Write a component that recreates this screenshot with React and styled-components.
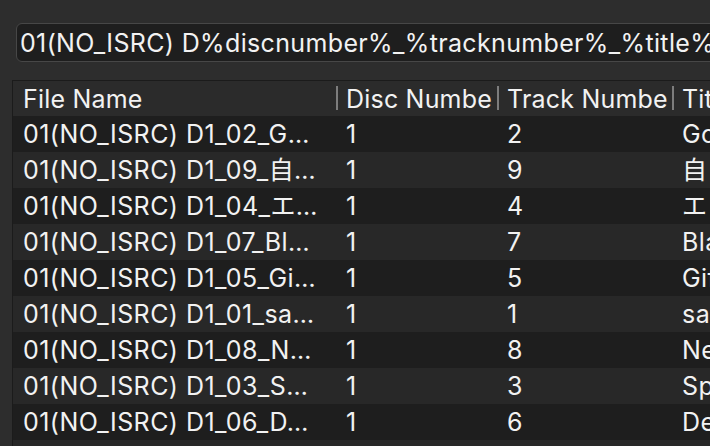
import React from 'react'
import styled, { createGlobalStyle } from 'styled-components'

const GlobalStyle = createGlobalStyle`
  html, body {
    margin: 0;
    padding: 0;
    background: #2d2d2d;
    overflow: hidden;
  }
  body {
    font-family: Inter, "Noto Sans CJK JP", sans-serif;
    color: #ececec;
  }
`

const columns = [
  { key: 'file', label: 'File Name', width: 323 },
  { key: 'disc', label: 'Disc Numbe', width: 161 },
  { key: 'track', label: 'Track Numbe', width: 175 },
  { key: 'title', label: 'Title', width: 260 }
]

const rows = [
  { file: '01(NO_ISRC) D1_02_G…', disc: '1', track: '2', title: 'Good Night' },
  { file: '01(NO_ISRC) D1_09_自…', disc: '1', track: '9', title: '自己紹介' },
  { file: '01(NO_ISRC) D1_04_エ…', disc: '1', track: '4', title: 'エンドロール' },
  { file: '01(NO_ISRC) D1_07_Bl…', disc: '1', track: '7', title: 'Black' },
  { file: '01(NO_ISRC) D1_05_Gi…', disc: '1', track: '5', title: 'Gift' },
  { file: '01(NO_ISRC) D1_01_sa…', disc: '1', track: '1', title: 'sayonara' },
  { file: '01(NO_ISRC) D1_08_N…', disc: '1', track: '8', title: 'New Day' },
  { file: '01(NO_ISRC) D1_03_S…', disc: '1', track: '3', title: 'Spring' },
  { file: '01(NO_ISRC) D1_06_D…', disc: '1', track: '6', title: 'Dear' },
  { file: '', disc: '', track: '', title: '' }
]

const gridTemplate = columns.map(c => `${c.width}px`).join(' ')

const App = () => {
  return (
    <>
      <GlobalStyle />
      <StyledWindow>
        <StyledPattern>
          <StyledPatternText>
            01(NO_ISRC) D%discnumber%_%tracknumber%_%title%
          </StyledPatternText>
        </StyledPattern>

        <StyledTable>
          <StyledHeaderRow>
            {columns.map((c, i) => (
              <StyledHeaderCell key={c.key} $divider={i > 0}>
                {c.label}
              </StyledHeaderCell>
            ))}
          </StyledHeaderRow>
          {rows.map((r, i) => (
            <StyledRow key={i} $alt={i % 2 === 1}>
              {columns.map(c => (
                <StyledCell key={c.key}>{r[c.key]}</StyledCell>
              ))}
            </StyledRow>
          ))}
        </StyledTable>
      </StyledWindow>
    </>
  )
}

const StyledWindow = styled.div`
  width: 710px;
  height: 446px;
  overflow: hidden;
  display: flex;
  flex-direction: column;
  background: #2d2d2d;
`

const StyledPattern = styled.div`
  margin: 23px 0 0 16px;
  width: 900px;
  height: 39px;
  box-sizing: border-box;
  display: flex;
  align-items: center;
  padding-left: 3px;
  background: #1e1e1e;
  border: 1px solid #474747;
  border-radius: 6px;
  flex-shrink: 0;
`

const StyledPatternText = styled.span`
  font-size: 25px;
  line-height: 30px;
  letter-spacing: 0.35px;
  white-space: nowrap;
  color: #f2f2f2;
`

const StyledTable = styled.div`
  margin: 18px 0 0 12px;
  width: 940px;
  border-left: 1px solid #1b1b1b;
  border-top: 1px solid #1b1b1b;
  display: flex;
  flex-direction: column;
  flex-shrink: 0;
`

const StyledHeaderRow = styled.div`
  display: grid;
  grid-template-columns: ${gridTemplate};
  height: 35px;
  background: #2b2b2b;
`

const StyledHeaderCell = styled.div`
  position: relative;
  display: flex;
  align-items: center;
  padding-left: 10px;
  font-size: 25px;
  line-height: 30px;
  letter-spacing: 0.2px;
  white-space: nowrap;
  overflow: hidden;
  color: #f2f2f2;

  &::before {
    content: '';
    display: ${p => (p.$divider ? 'block' : 'none')};
    position: absolute;
    left: 0;
    top: 5px;
    width: 2px;
    height: 24px;
    background: #7d7d7d;
  }
`

const StyledRow = styled.div`
  display: grid;
  grid-template-columns: ${gridTemplate};
  height: 36px;
  background: ${p => (p.$alt ? '#282828' : '#1e1e1e')};
`

const StyledCell = styled.div`
  display: flex;
  align-items: center;
  padding-left: 10px;
  font-size: 25px;
  line-height: 30px;
  letter-spacing: 0.45px;
  white-space: nowrap;
  overflow: hidden;
  color: #f2f2f2;
`

export default App
